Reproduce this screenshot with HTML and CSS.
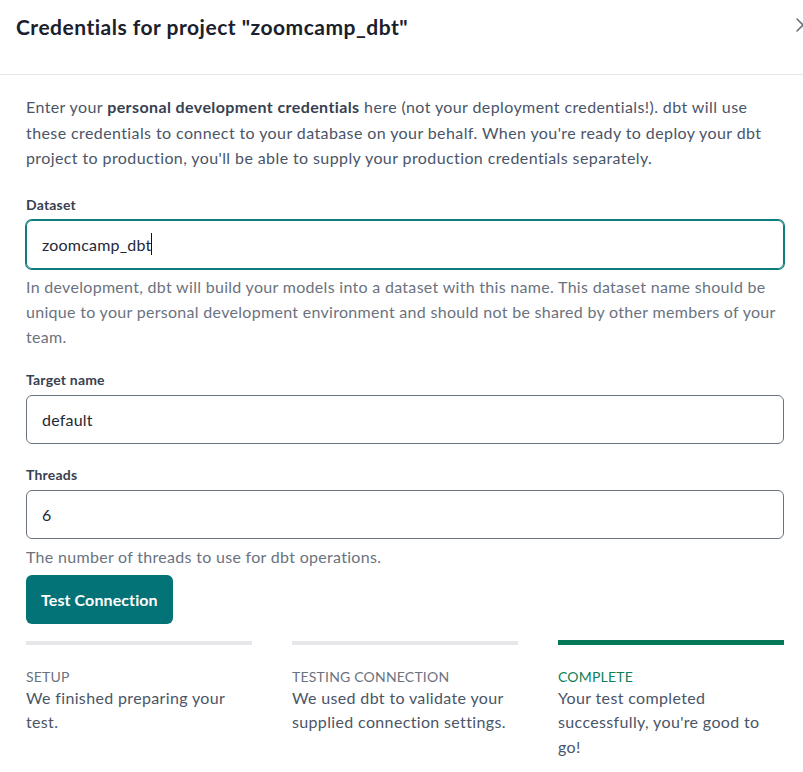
FILE: index.html
```html
<!DOCTYPE html>
<html lang="en">
<head>
<meta charset="utf-8">
<title>Credentials</title>
<link rel="stylesheet" href="styles.css">
</head>
<body>
<div class="modal">
  <header class="modal-header">
    <h1 class="modal-title">Credentials for project "zoomcamp_dbt"</h1>
    <button class="close-btn" aria-label="Close">
      <svg width="16" height="16" viewBox="0 0 16 16"><path d="M2 2 L14 14 M14 2 L2 14" stroke="#6b7280" stroke-width="1.6" fill="none" stroke-linecap="round"/></svg>
    </button>
  </header>
  <div class="modal-body">
    <p class="intro">Enter your <strong>personal development credentials</strong> here (not your deployment credentials!). dbt will use these credentials to connect to your database on your behalf. When you're ready to deploy your dbt project to production, you'll be able to supply your production credentials separately.</p>

    <div class="field">
      <label class="field-label">Dataset</label>
      <div class="input focused">zoomcamp_dbt<span class="caret"></span></div>
      <p class="help">In development, dbt will build your models into a dataset with this name. This dataset name should be unique to your personal development environment and should not be shared by other members of your team.</p>
    </div>

    <div class="field">
      <label class="field-label">Target name</label>
      <div class="input">default</div>
    </div>

    <div class="field last">
      <label class="field-label">Threads</label>
      <div class="input">6</div>
      <p class="help">The number of threads to use for dbt operations.</p>
    </div>

    <button class="btn-primary">Test Connection</button>

    <div class="steps">
      <div class="step">
        <div class="bar"></div>
        <div class="step-title">Setup</div>
        <div class="step-desc">We finished preparing your test.</div>
      </div>
      <div class="step">
        <div class="bar"></div>
        <div class="step-title">Testing Connection</div>
        <div class="step-desc">We used dbt to validate your supplied connection settings.</div>
      </div>
      <div class="step done">
        <div class="bar"></div>
        <div class="step-title">Complete</div>
        <div class="step-desc">Your test completed successfully, you're good to go!</div>
      </div>
    </div>
  </div>
</div>
</body>
</html>
```

FILE: styles.css
```css
* { box-sizing: border-box; }
html, body {
  margin: 0;
  padding: 0;
  background: #ffffff;
  overflow: hidden;
}
body {
  font-family: "Lato", "Open Sans", sans-serif;
  color: #1f2937;
  width: 803px;
  height: 772px;
  letter-spacing: 0.2px;
}
.modal {
  width: 803px;
}
.modal-header {
  height: 75px;
  border-bottom: 1px solid #e5e7eb;
  display: flex;
  align-items: flex-start;
  justify-content: space-between;
  padding: 13px 0 0 16px;
}
.modal-title {
  margin: 0;
  font-size: 21px;
  line-height: 28px;
  font-weight: 700;
  letter-spacing: 0.5px;
  color: #1a202c;
}
.close-btn {
  background: none;
  border: none;
  padding: 0;
  margin: 4px -8px 0 0;
  width: 16px;
  height: 16px;
  display: flex;
}
.modal-body {
  padding: 19px 19px 0 26px;
}
.intro {
  margin: 0 0 24px 0;
  font-size: 16px;
  line-height: 25.5px;
  letter-spacing: 0.4px;
  color: #4a5568;
}
.intro strong {
  color: #374151;
  font-weight: 700;
}
.field {
  display: flex;
  flex-direction: column;
  margin-bottom: 21px;
}
.field.last {
  margin-bottom: 6px;
}
.field-label {
  font-size: 14px;
  line-height: 20px;
  font-weight: 700;
  color: #374151;
  margin-bottom: 5px;
}
.input {
  height: 49px;
  border: 1px solid #6b7280;
  border-radius: 6px;
  padding: 0 15px;
  display: flex;
  align-items: center;
  font-size: 16px;
  color: #1f2937;
}
.input.focused {
  border-color: #0e7c7b;
  box-shadow: 0 0 0 1px #0e7c7b;
}
.caret {
  display: inline-block;
  width: 1px;
  height: 22px;
  background: #111;
}
.help {
  margin: 5px 0 0 0;
  font-size: 16px;
  line-height: 25px;
  letter-spacing: 0.3px;
  color: #6b7280;
}
.btn-primary {
  background: #047377;
  color: #ffffff;
  border: none;
  border-radius: 6px;
  height: 49px;
  padding: 0 15px;
  font-family: inherit;
  font-size: 16px;
  font-weight: 700;
  letter-spacing: 0.1px;
}
.steps {
  display: grid;
  grid-template-columns: repeat(3, 1fr);
  column-gap: 40px;
  margin-top: 17px;
}
.bar {
  height: 4px;
  background: #e5e7eb;
}
.step.done .bar {
  background: #047857;
  height: 5px;
  margin-top: -1px;
}
.step-title {
  margin-top: 22px;
  font-size: 14px;
  line-height: 19px;
  text-transform: uppercase;
  color: #6b7280;
}
.step.done .step-title {
  color: #0e7f56;
}
.step-desc {
  font-size: 16px;
  line-height: 24.5px;
  letter-spacing: 0.35px;
  color: #4a5568;
}
```
